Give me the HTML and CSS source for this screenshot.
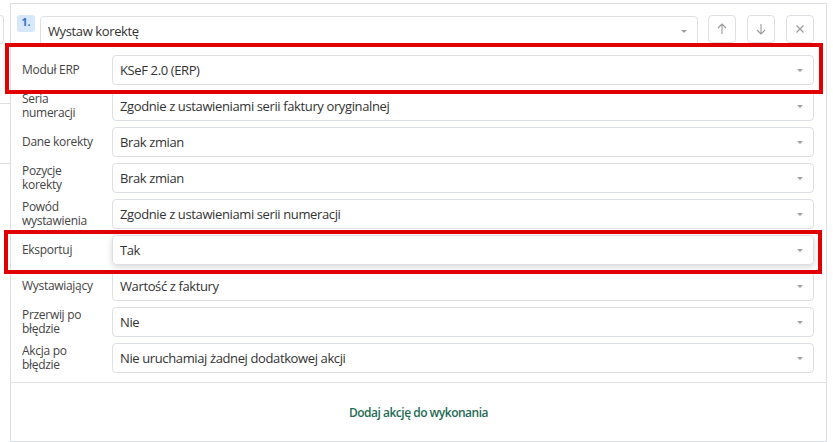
FILE: index.html
```html
<!DOCTYPE html>
<html lang="pl">
<head>
  <meta charset="UTF-8" />
  <title>Akcje po imporcie</title>
  <link rel="stylesheet" href="styles.css">
</head>
<body>

  <div class="page">
    <div class="side">
      <div class="side-box"></div>
      <div class="side-line"></div>
      <div class="side-line"></div>
    </div>

    <div class="panel">
      <div class="action-head">
        <span class="step-no">1.</span>
        <div class="select select-main">Wystaw korektę<span class="caret"></span></div>
        <button class="icon-btn" type="button">
          <svg width="12" height="12" viewBox="0 0 12 12"><path d="M6 11V1M2 5l4-4 4 4" fill="none" stroke="#999" stroke-width="1.1"/></svg>
        </button>
        <button class="icon-btn" type="button">
          <svg width="12" height="12" viewBox="0 0 12 12"><path d="M6 1v10M2 7l4 4 4-4" fill="none" stroke="#999" stroke-width="1.1"/></svg>
        </button>
        <button class="icon-btn" type="button">
          <svg width="10" height="10" viewBox="0 0 10 10"><path d="M1.5 1.5l7 7M8.5 1.5l-7 7" fill="none" stroke="#999" stroke-width="1.1"/></svg>
        </button>
      </div>

      <div class="fields">
        <div class="field">
          <label>Moduł ERP</label>
          <div class="select">KSeF 2.0 (ERP)<span class="caret"></span></div>
        </div>
        <div class="field">
          <label>Seria numeracji</label>
          <div class="select">Zgodnie z ustawieniami serii faktury oryginalnej<span class="caret"></span></div>
        </div>
        <div class="field">
          <label>Dane korekty</label>
          <div class="select">Brak zmian<span class="caret"></span></div>
        </div>
        <div class="field">
          <label>Pozycje korekty</label>
          <div class="select">Brak zmian<span class="caret"></span></div>
        </div>
        <div class="field">
          <label>Powód wystawienia</label>
          <div class="select">Zgodnie z ustawieniami serii numeracji<span class="caret"></span></div>
        </div>
        <div class="field">
          <label>Eksportuj</label>
          <div class="select select-hover">Tak<span class="caret"></span></div>
        </div>
        <div class="field">
          <label>Wystawiający</label>
          <div class="select">Wartość z faktury<span class="caret"></span></div>
        </div>
        <div class="field">
          <label>Przerwij po błędzie</label>
          <div class="select">Nie<span class="caret"></span></div>
        </div>
        <div class="field">
          <label>Akcja po błędzie</label>
          <div class="select">Nie uruchamiaj żadnej dodatkowej akcji<span class="caret"></span></div>
        </div>
      </div>

      <div class="panel-footer">
        <a class="add-link" href="#">Dodaj akcję do wykonania</a>
      </div>

      <div class="mark mark-erp"></div>
      <div class="mark mark-export"></div>
    </div>
  </div>

</body>
</html>
```

FILE: styles.css
```css
body {
  margin: 0;
  font-family: "Open Sans", Arial, sans-serif;
  background: #fff;
  color: #333;
}

.page {
  display: flex;
  height: 442px;
}

.side {
  width: 10px;
  padding-top: 15px;
  box-sizing: border-box;
}

.side-box {
  width: 3px;
  height: 27px;
  border: 1px solid #dcdfe4;
  border-left: none;
  border-radius: 0 4px 4px 0;
}

.side-line {
  height: 59px;
  border-bottom: 1px solid #dcdfe4;
}

.panel {
  position: relative;
  flex: 1;
  margin: 3px 6px 0 0;
  border: 1px solid #dcdfe4;
  border-bottom: none;
  display: flex;
  flex-direction: column;
}

.action-head {
  display: flex;
  align-items: flex-start;
  padding: 11px 12px 0 6px;
}

.step-no {
  width: 18px;
  height: 17px;
  margin-right: 5px;
  border-radius: 3px;
  background: #d6e7fb;
  color: #2f6fc6;
  font-size: 10.5px;
  font-weight: 700;
  line-height: 15px;
  text-align: center;
}

.select {
  position: relative;
  flex: 1;
  height: 30px;
  padding: 0 30px 0 7px;
  border: 1px solid #dcdfe4;
  border-radius: 4px;
  box-sizing: border-box;
  font-size: 13px;
  letter-spacing: -0.38px;
  line-height: 28px;
  color: #333;
  white-space: nowrap;
}

.select-main {
  margin-top: 1px;
  margin-right: 10px;
}

.select-hover {
  box-shadow: 0 2px 6px rgba(0, 0, 0, 0.16);
}

.caret {
  position: absolute;
  right: 10px;
  top: 13px;
  border-left: 3px solid transparent;
  border-right: 3px solid transparent;
  border-top: 3px solid #9a9da3;
}

.icon-btn {
  width: 28px;
  height: 28px;
  margin-left: 11px;
  padding: 0;
  border: 1px solid #dcdfe4;
  border-radius: 4px;
  background: #fff;
  display: flex;
  align-items: center;
  justify-content: center;
}

.icon-btn:first-of-type {
  margin-left: 0;
}

.fields {
  display: flex;
  flex-direction: column;
  gap: 6px;
  padding: 9px 12px 9px 11px;
  border-bottom: 1px solid #dcdfe4;
}

.field {
  display: flex;
  align-items: center;
}

.field label {
  width: 90px;
  padding-right: 10px;
  box-sizing: border-box;
  font-size: 12px;
  letter-spacing: -0.3px;
  line-height: 14px;
  color: #444;
}

.panel-footer {
  height: 58px;
  border-bottom: 1px solid #dcdfe4;
  display: flex;
  align-items: center;
  justify-content: center;
}

.add-link {
  font-size: 12px;
  font-weight: 600;
  letter-spacing: -0.5px;
  color: #1f6b55;
  text-decoration: none;
}

.mark {
  position: absolute;
  border: 4px solid #e00000;
}

.mark-erp {
  left: -6px;
  top: 39px;
  width: 810px;
  height: 43px;
}

.mark-export {
  left: -7px;
  top: 226px;
  width: 810px;
  height: 36px;
}
```
